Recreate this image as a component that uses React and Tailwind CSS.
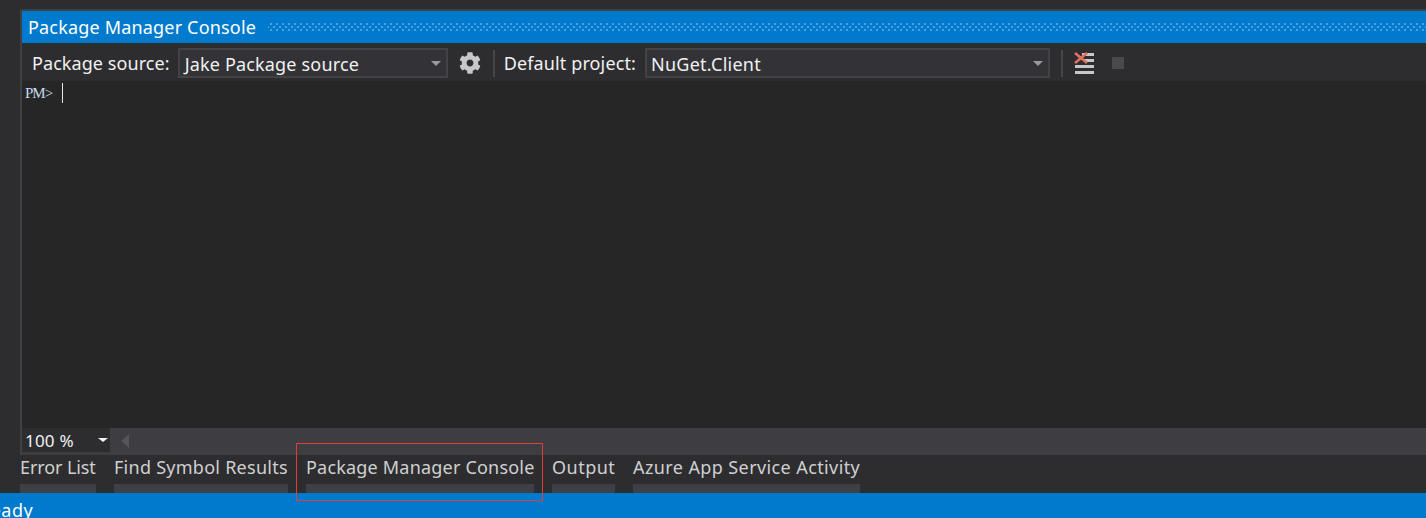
import { FaCog } from "react-icons/fa";

const FONT = "font-['Noto_Sans','Open_Sans',sans-serif]";

function Combo({ label, width, textClass }) {
  return (
    <div className={`flex items-center justify-between h-[30px] border-2 border-[#434346] bg-[#333337] pl-[4px] pr-[5px] ${width}`}>
      <span className={`text-[18px] leading-none pt-[2px] text-[#f1f1f1] ${textClass}`}>{label}</span>
      <span className="w-0 h-0 border-x-[5px] border-x-transparent border-t-[5px] border-t-[#999999]" />
    </div>
  );
}

function Divider() {
  return <div className="w-[2px] h-[27px] bg-[#46464a]" />;
}

function ClearIcon() {
  return (
    <svg width="21" height="23" viewBox="0 0 21 23" className="block">
      <rect x="8" y="1" width="12" height="3" fill="#c8c8c8" />
      <rect x="10" y="7" width="10" height="3" fill="#c8c8c8" />
      <rect x="1" y="13" width="19" height="3" fill="#c8c8c8" />
      <rect x="1" y="19" width="19" height="3" fill="#c8c8c8" />
      <path d="M1 1 L13 11 M13 1 L1 11" stroke="#e0705f" strokeWidth="2.6" />
    </svg>
  );
}

function Tab({ label, className }) {
  return (
    <div className={`flex flex-col justify-between h-full ${className}`}>
      <span className="text-[18px] leading-[25px] text-[#d0d0d0] whitespace-nowrap">{label}</span>
      <div className="h-[9px] bg-[#3f3f46]" />
    </div>
  );
}

export default function App() {
  return (
    <div className={`relative w-[1426px] h-[518px] overflow-hidden flex flex-col bg-[#2d2d30] ${FONT}`}>
      <div className="flex-1 min-h-0 flex flex-col pt-[9px] pl-[20px]">
        <div className="flex-1 min-h-0 flex flex-col border-l-2 border-t-2 border-[#3f3f46]">
          {/* title bar */}
          <div className="h-[32px] flex items-center bg-[#007acc] pl-[6px] gap-[12px]">
            <span className="text-[18px] leading-none tracking-[0.18px] text-white whitespace-nowrap">Package Manager Console</span>
            <div className="flex-1 h-[9px] bg-[radial-gradient(circle,#4aa3e0_1px,transparent_1.3px),radial-gradient(circle,#4aa3e0_1px,transparent_1.3px)] bg-[length:6px_6px] bg-[position:0_-2px,3px_1px]" />
          </div>
          {/* toolbar */}
          <div className="h-[38px] flex items-center bg-[#2d2d30] pl-[10px] pt-[2px]">
            <span className="text-[18px] leading-none tracking-[0.07px] text-[#f1f1f1] whitespace-nowrap mr-[8px]">Package source:</span>
            <Combo label="Jake Package source" width="w-[270px] pl-[5px]" textClass="tracking-[0.17px]" />
            <FaCog size={22} className="text-[#c8c8c8] ml-[11px] mr-[12px]" />
            <Divider />
            <span className="text-[18px] leading-none tracking-[0.13px] text-[#f1f1f1] whitespace-nowrap ml-[9px] mr-[9px]">Default project:</span>
            <Combo label="NuGet.Client" width="w-[405px]" textClass="tracking-[0.25px]" />
            <div className="ml-[11px]"><Divider /></div>
            <div className="ml-[11px]"><ClearIcon /></div>
            <div className="w-[12px] h-[12px] bg-[#4a4a4d] ml-[17px]" />
          </div>
          {/* console */}
          <div className="flex-1 min-h-0 bg-[#262626] pl-[3px] pt-[2px] flex items-start">
            <span className="font-['Liberation_Serif',serif] text-[15px] leading-[20px] tracking-[-1px] text-[#c8dcf0]">PM&gt;</span>
            <div className="w-px h-[20px] bg-[#e8e8e8] ml-[10px]" />
          </div>
          {/* zoom row */}
          <div className="h-[27px] flex items-start bg-[#3e3e42]">
            <div className="w-[88px] h-[24px] flex items-center justify-between bg-[#2d2d30] pl-[3px] pr-[2px]">
              <span className="text-[17px] leading-none tracking-[0.2px] text-[#f1f1f1]">100 %</span>
              <span className="w-0 h-0 border-x-[5px] border-x-transparent border-t-[4px] border-t-[#f1f1f1]" />
            </div>
            <span className="ml-[11px] mt-[6px] w-0 h-0 border-y-[7px] border-y-transparent border-r-[8px] border-r-[#55555a]" />
          </div>
        </div>
      </div>
      {/* bottom tabs */}
      <div className="h-[38px] flex gap-[18px] pl-[20px]">
        <Tab label="Error List" className="w-[76px] tracking-[-0.1px]" />
        <Tab label="Find Symbol Results" className="w-[174px] tracking-[0.26px]" />
        <Tab label="Package Manager Console" className="w-[228px] tracking-[0.2px]" />
        <Tab label="Output" className="w-[63px] tracking-[0.5px]" />
        <Tab label="Azure App Service Activity" className="w-[227px] tracking-[0.4px]" />
      </div>
      {/* status bar */}
      <div className="h-[25px] bg-[#007acc] overflow-hidden">
        <span className="block text-[18px] leading-[25px] tracking-[0.5px] text-white ml-[-21px] mt-[5px]">Ready</span>
      </div>
      {/* red annotation box */}
      <div className="absolute left-[296px] top-[443px] w-[247px] h-[58px] border border-[#e03c3c]" />
    </div>
  );
}
